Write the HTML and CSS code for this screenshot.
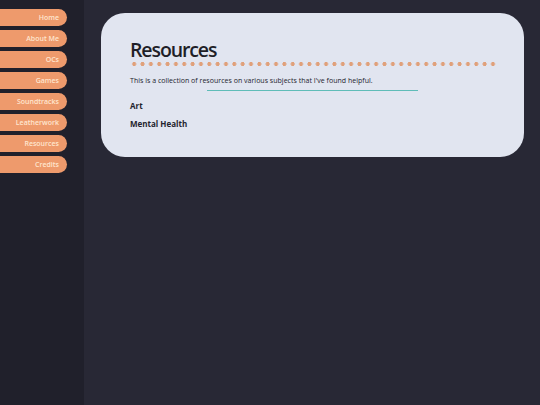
FILE: index.html
```html
<!DOCTYPE html>
<html>
<head>
<meta charset="utf-8">
<link rel="stylesheet" href="styles.css">
</head>
<body>
<div class="layout">
  <nav class="sidebar">
    <a class="nav-btn">Home</a>
    <a class="nav-btn">About Me</a>
    <a class="nav-btn">OCs</a>
    <a class="nav-btn">Games</a>
    <a class="nav-btn">Soundtracks</a>
    <a class="nav-btn">Leatherwork</a>
    <a class="nav-btn">Resources</a>
    <a class="nav-btn">Credits</a>
  </nav>
  <main class="main">
    <section class="card">
      <h1 class="title">Resources</h1>
      <div class="dots"></div>
      <p class="intro">This is a collection of resources on various subjects that I've found helpful.</p>
      <div class="rule"></div>
      <h2 class="topic">Art</h2>
      <h2 class="topic">Mental Health</h2>
    </section>
  </main>
</div>
</body>
</html>
```

FILE: styles.css
```css
html, body {
  margin: 0;
  padding: 0;
  height: 100%;
}
body {
  font-family: "Open Sans", "Noto Sans", sans-serif;
  background: #282835;
}
.layout {
  display: flex;
  height: 405px;
}
.sidebar {
  flex: 0 0 84px;
  width: 84px;
  background: #20202b;
  display: flex;
  flex-direction: column;
  gap: 4px;
  padding-top: 9px;
  box-sizing: border-box;
}
.nav-btn {
  display: block;
  width: 67px;
  height: 17px;
  line-height: 17px;
  box-sizing: border-box;
  padding-right: 8px;
  text-align: right;
  background: #ee9a6c;
  color: #ffe6cf;
  font-size: 7px;
  font-weight: 600;
  border-radius: 0 9px 9px 0;
}
.main {
  flex: 1;
  min-width: 0;
  padding: 13px 16px 0 17px;
}
.card {
  background: #e1e5f0;
  border-radius: 24px;
  height: 144px;
  box-sizing: border-box;
  padding: 25px 30px 0 29px;
}
.title {
  margin: 0;
  font-size: 19.5px;
  font-weight: 600;
  color: #1f1f28;
  line-height: 24px;
  letter-spacing: -1.1px;
}
.dots {
  margin-top: 0;
  height: 4px;
  width: 366px;
  background-image: radial-gradient(circle, #e0a07a 1.8px, transparent 2.1px);
  background-size: 8.35px 4px;
  background-repeat: repeat-x;
}
.intro {
  margin: 10px 0 0 0;
  font-size: 7px;
  color: #24242e;
  line-height: 9px;
  letter-spacing: 0.02px;
}
.rule {
  margin: 5px 0 0 77px;
  width: 211px;
  height: 1px;
  background: #5fbcb8;
}
.topic {
  margin: 9px 0 0 0;
  font-size: 8px;
  font-weight: 700;
  color: #24242e;
  line-height: 11px;
}
.topic + .topic {
  margin-top: 7px;
}
```
